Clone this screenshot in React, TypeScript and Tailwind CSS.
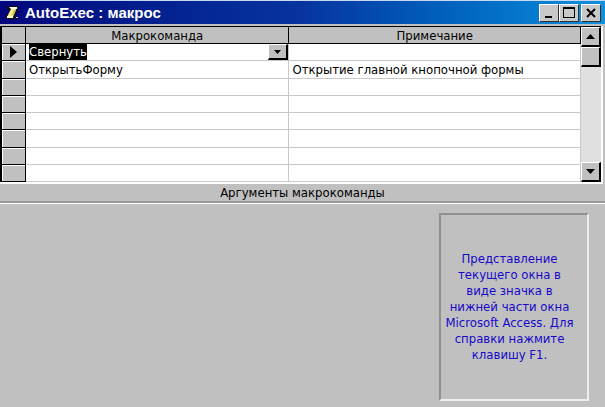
import React, { useRef, useState } from 'react';

interface MacroRow {
  action: string;
  comment: string;
}

const rows: MacroRow[] = [
  { action: 'Свернуть', comment: '' },
  { action: 'ОткрытьФорму', comment: 'Открытие главной кнопочной формы' },
  { action: '', comment: '' },
  { action: '', comment: '' },
  { action: '', comment: '' },
  { action: '', comment: '' },
  { action: '', comment: '' },
  { action: '', comment: '' },
];

const raised =
  'flex items-center justify-center bg-[#c0c0c0] border-t border-l border-t-white border-l-white border-r-2 border-b-2 border-r-black border-b-black';

const titleButton =
  'flex h-[18px] w-5 items-center justify-center bg-[#c8c8c8] border border-t-white border-l-white border-r-[#303030] border-b-[#303030]';

function MacroIcon() {
  return (
    <svg width="14" height="15" viewBox="0 0 14 15" aria-hidden="true">
      <path d="M1 2l2-1h9v3l-3 8h3v2H0v-3l4-6H1z" fill="#101018" />
      <path d="M3 2h8v2H5z" fill="#f8f8e8" />
      <path d="M5 4h5l-3 8H1z" fill="#f2ec90" />
      <path d="M1 11h6v2H1z" fill="#fffbd0" />
      <path d="M8 5h2l-2 5H6z" fill="#c8c050" />
      <path d="M10 12h2v1h-2z" fill="#d0d0d0" />
    </svg>
  );
}

function Arrow({ up = false }: { up?: boolean }) {
  return (
    <svg width="9" height="5" viewBox="0 0 9 5" aria-hidden="true">
      <path d={up ? 'M4.500 0L9 5H0z' : 'M0 0h9L4.500 5z'} fill="#000" />
    </svg>
  );
}

function TitleBar() {
  return (
    <header className="flex h-6 items-center border-t border-[#c8d8f0] bg-linear-to-r from-[#04047c] via-[#0834a0] to-[#1090dc] pl-1.5 pr-1">
      <MacroIcon />
      <h1 className="ml-[5px] flex-1 font-['Liberation_Sans',sans-serif] text-[15px] leading-5 font-bold text-white">
        AutoExec : макрос
      </h1>
      <div className="flex">
        <button aria-label="Свернуть окно" className={titleButton}>
          <svg width="14" height="14" viewBox="0 0 14 14" aria-hidden="true">
            <path d="M3 10h7v2H3z" />
          </svg>
        </button>
        <button aria-label="Развернуть окно" className={titleButton}>
          <svg width="14" height="14" viewBox="0 0 14 14" aria-hidden="true">
            <path d="M1 1h12v11H1zM2 3v8h10V3z" fillRule="evenodd" />
          </svg>
        </button>
        <button aria-label="Закрыть окно" className={`${titleButton} ml-0.5`}>
          <svg width="14" height="14" viewBox="0 0 14 14" aria-hidden="true">
            <path d="M3 3l8 8M11 3l-8 8" stroke="#000" strokeWidth="2" />
          </svg>
        </button>
      </div>
    </header>
  );
}

function ActionPicker() {
  const [action, setAction] = useState(rows[0].action);
  const selectRef = useRef<HTMLSelectElement>(null);

  return (
    <div className="flex h-4 items-center justify-between">
      <select
        ref={selectRef}
        aria-label="Макрокоманда"
        value={action}
        onChange={(e) => setAction(e.target.value)}
        className="h-4 appearance-none bg-black text-white outline-none [field-sizing:content]"
      >
        <option>Свернуть</option>
        <option>ОткрытьФорму</option>
      </select>
      <button
        aria-label="Список макрокоманд"
        onClick={() => selectRef.current?.showPicker()}
        className={`${raised} h-4 w-5`}
      >
        <svg width="7" height="4" viewBox="0 0 7 4" aria-hidden="true">
          <path d="M0 0h7L3.500 4z" />
        </svg>
      </button>
    </div>
  );
}

function MacroTable() {
  return (
    <table className="h-[156px] flex-1 table-fixed border-separate border-spacing-0 border-t border-l-2 border-black bg-white leading-[14px]">
      <colgroup>
        <col className="w-6" />
        <col className="w-[45.500%]" />
        <col />
      </colgroup>
      <thead>
        <tr className="h-[17px] bg-[#c0c0c0]">
          <th aria-label="Строка" className="border-r border-b border-black p-0" />
          <th className="border-r border-b border-black p-0 pt-0.5 font-normal">Макрокоманда</th>
          <th className="border-r border-b border-black p-0 pt-0.5 font-normal">Примечание</th>
        </tr>
      </thead>
      <tbody>
        {rows.map((row, i) => (
          <tr key={i} className="h-[17px]">
            <td className="border-r border-b border-black bg-[#c0c0c0] p-0 shadow-[inset_1px_1px_0_#fff]">
              {i === 0 && (
                <svg width="7" height="12" viewBox="0 0 7 12" className="mx-auto" aria-label="Текущая строка">
                  <path d="M0 0l7 6-7 6z" />
                </svg>
              )}
            </td>
            <td className={`border-r border-b border-[#c8c8c8] pr-0 pb-0 pl-[3px] ${i === 0 ? 'pt-0' : 'pt-0.5'}`}>
              {i === 0 ? <ActionPicker /> : row.action}
            </td>
            <td className="border-r border-b border-[#c8c8c8] pt-0.5 pr-0 pb-0 pl-[3px]">{row.comment}</td>
          </tr>
        ))}
      </tbody>
    </table>
  );
}

function ScrollBar() {
  return (
    <div className="flex w-5 flex-col border-t border-black bg-[#e0e0e0]">
      <button aria-label="Вверх" className={`${raised} h-5`}>
        <Arrow up />
      </button>
      <div className={`${raised} h-5`} />
      <div className="flex-1" />
      <button aria-label="Вниз" className={`${raised} h-5`}>
        <Arrow />
      </button>
    </div>
  );
}

export default function App() {
  return (
    <div className="flex min-h-screen flex-col bg-[#c0c0c0] font-['DejaVu_Sans_Condensed','DejaVu_Sans',sans-serif] text-[13px] text-black">
      <TitleBar />
      <main className="flex flex-1 flex-col pt-0.5">
        <section className="mr-0.5 flex border-r-2 border-b-2 border-white">
          <MacroTable />
          <ScrollBar />
        </section>

        <section className="flex flex-1 flex-col">
          <h2 className="border-b-2 border-[#999] pt-px text-center leading-4 shadow-[0_1px_0_#fff]">
            Аргументы макрокоманды
          </h2>
          <div className="flex justify-end pt-2.5 pr-4">
            <p className="w-[150px] border-2 border-t-[#909090] border-l-[#909090] border-r-[#eee] border-b-[#eee] py-9 pr-2.5 pl-px text-center leading-4 text-[#1808c8]">
              Представление текущего окна в виде значка в нижней части окна Microsoft Access. Для справки нажмите клавишу F1.
            </p>
          </div>
        </section>
      </main>
    </div>
  );
}
